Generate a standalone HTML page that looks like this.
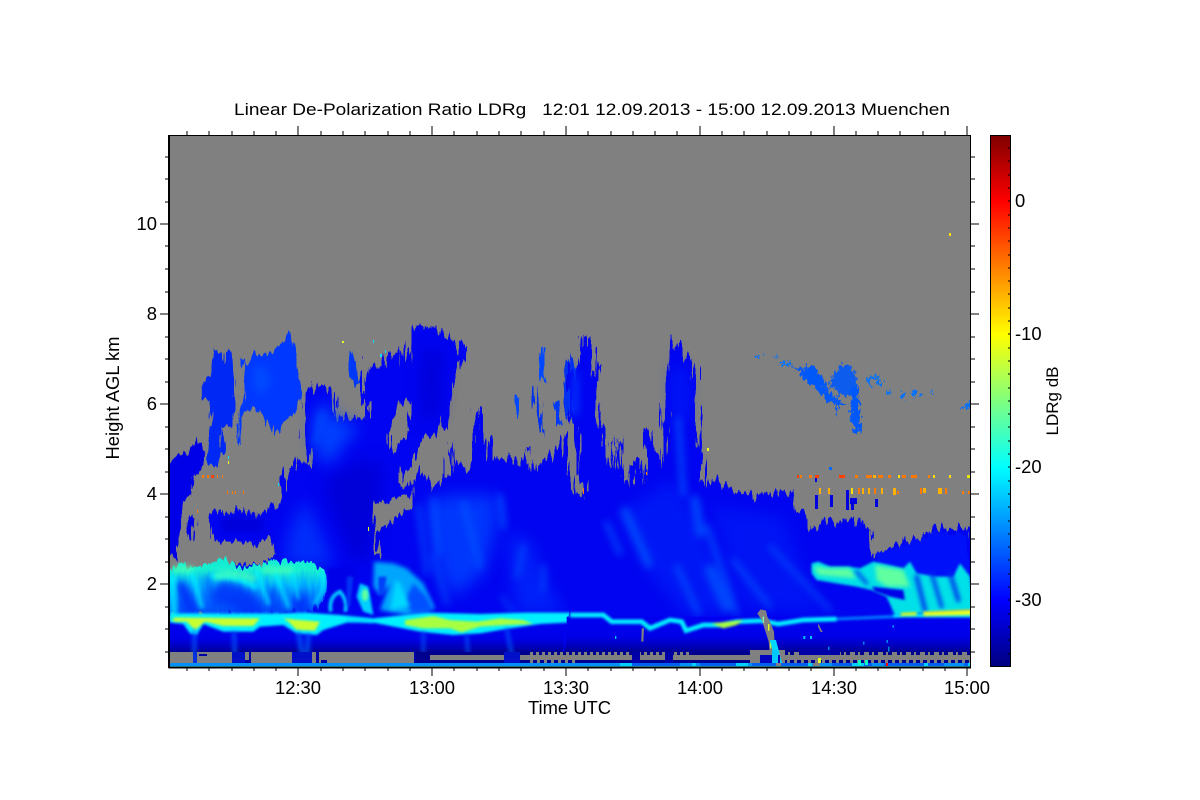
<!DOCTYPE html>
<html><head><meta charset="utf-8"><style>
html,body{margin:0;padding:0;background:#fff;width:1200px;height:800px;overflow:hidden}
svg{display:block}
text{font-family:"Liberation Sans",sans-serif;fill:#000;font-size:18.4px}
</style></head><body>
<svg xmlns="http://www.w3.org/2000/svg" width="1200" height="800" viewBox="0 0 1200 800">
<defs>
<clipPath id="plot"><rect x="169" y="135" width="801" height="532"/></clipPath>
<linearGradient id="jet" x1="0" y1="1" x2="0" y2="0">
<stop offset="0" stop-color="#000080"/><stop offset=".125" stop-color="#0000ff"/><stop offset=".375" stop-color="#00ffff"/><stop offset=".625" stop-color="#ffff00"/><stop offset=".875" stop-color="#ff0000"/><stop offset="1" stop-color="#800000"/>
</linearGradient>
<linearGradient id="low" x1="0" y1="0" x2="0" y2="1">
<stop offset="0" stop-color="#0000f0"/><stop offset=".55" stop-color="#0000e8"/><stop offset=".8" stop-color="#0000c0"/><stop offset="1" stop-color="#000090"/>
</linearGradient>
<linearGradient id="band" gradientUnits="userSpaceOnUse" x1="0" y1="710" x2="0" y2="880">
<stop offset="0" stop-color="#10e8d8"/><stop offset=".22" stop-color="#18f0d0"/><stop offset=".5" stop-color="#00b0ff"/><stop offset=".8" stop-color="#0060ff"/><stop offset="1" stop-color="#0048f8"/>
</linearGradient>
<filter id="b1" filterUnits="userSpaceOnUse" x="-100" y="-100" width="1500" height="1300" color-interpolation-filters="sRGB"><feGaussianBlur stdDeviation="11"/></filter>
<filter id="b2" filterUnits="userSpaceOnUse" x="-100" y="-100" width="1500" height="1300" color-interpolation-filters="sRGB"><feGaussianBlur stdDeviation="24"/></filter>
<filter id="b3" filterUnits="userSpaceOnUse" x="-100" y="-100" width="1500" height="1300" color-interpolation-filters="sRGB"><feGaussianBlur stdDeviation="4"/></filter>
<filter id="b4" filterUnits="userSpaceOnUse" x="-100" y="-100" width="1500" height="1300" color-interpolation-filters="sRGB"><feGaussianBlur stdDeviation="6"/></filter>
<filter id="j" filterUnits="userSpaceOnUse" x="-20" y="-20" width="1320" height="1120" color-interpolation-filters="sRGB">
<feTurbulence type="fractalNoise" baseFrequency=".09 .012" numOctaves="2" seed="4" result="n"/>
<feDisplacementMap in="SourceGraphic" in2="n" scale="40" xChannelSelector="R" yChannelSelector="G"/>
</filter>
<filter id="j2" filterUnits="userSpaceOnUse" x="-20" y="-20" width="1320" height="1120" color-interpolation-filters="sRGB">
<feTurbulence type="fractalNoise" baseFrequency=".08 .008" numOctaves="3" seed="9" result="n"/>
<feDisplacementMap in="SourceGraphic" in2="n" scale="70" xChannelSelector="R" yChannelSelector="G"/>
</filter>
<filter id="j3" filterUnits="userSpaceOnUse" x="700" y="300" width="300" height="200" color-interpolation-filters="sRGB">
<feTurbulence type="fractalNoise" baseFrequency=".35 .2" numOctaves="2" seed="3" result="n"/>
<feDisplacementMap in="SourceGraphic" in2="n" scale="12" xChannelSelector="R" yChannelSelector="G"/>
</filter>
</defs>

<rect x="169" y="135" width="801" height="532" fill="#808080"/>

<g clip-path="url(#plot)">
<!-- ============ left half ============ -->
<g transform="translate(160,320) scale(.33333)">
 <g filter="url(#j)">
  <polygon fill="#0000e8" points="20,1000 20,440 55,400 80,405 105,350 135,395 130,430 100,470 98,520 78,525 62,585 55,720 40,712 20,700"/>
  <polygon fill="#0028f4" points="155,85 185,100 190,140 200,100 215,95 220,180 225,250 215,320 190,320 185,350 190,395 165,440 140,430 150,250 130,230 130,200 155,150"/>
  <polygon fill="#0038ff" points="245,110 265,130 290,100 330,100 365,70 395,30 405,100 415,180 425,230 400,280 370,310 340,350 320,290 280,260 250,290 235,380 230,320 250,240 255,190"/>
  <polygon fill="#0038f8" points="578,90 590,130 598,190 580,195 568,170"/>
  <polygon fill="#0048ff" points="1065,230 1075,225 1075,300 1066,290"/>
  <polygon fill="#0030f0" points="1130,190 1145,260 1152,355 1135,290 1120,240"/>
  <polygon fill="#0048ff" points="1142,85 1156,80 1152,190 1143,170"/>
  <polygon fill="#0038f8" points="1182,245 1198,240 1205,310 1190,320"/>
  <polygon fill="#0030f0" points="1208,190 1225,100 1240,140 1270,150 1270,320 1230,310 1212,260"/>
 </g>
 <polygon filter="url(#j2)" fill="#0004f0" points="150,590 185,570 240,570 290,590 330,555 360,545 365,470 410,420 448,440 432,340 425,250 460,195 510,200 530,250 535,290 590,285 622,310 625,260 600,230 600,170 625,130 660,150 685,105 715,100 725,60 745,160 740,130 760,30 800,15 850,35 900,70 912,110 880,180 870,240 860,320 820,340 790,350 760,425 730,450 722,500 745,500 760,480 790,450 820,500 870,460 868,350 880,440 905,445 930,430 935,350 955,250 970,380 985,340 1000,430 1020,420 1040,400 1060,420 1080,430 1105,380 1125,460 1140,430 1180,400 1200,340 1215,350 1230,480 1240,520 1280,520 1280,1000 150,1000"/>
 <!-- darker column -->
 <polygon fill="#0000d8" filter="url(#b2)" points="490,480 600,420 670,430 655,560 630,700 590,740 550,650 510,560"/>
 <polygon fill="#0000d8" filter="url(#b2)" points="790,85 850,95 835,280 790,310 785,200"/>
 <polygon fill="#0000d8" filter="url(#b1)" points="185,595 310,595 310,635 185,635"/>
 <!-- brighter cloud areas -->
 <polygon fill="#0048ff" opacity=".9" filter="url(#b2)" points="465,285 480,250 505,250 515,290 590,320 590,340 550,370 525,420 490,430 470,400 460,340"/>
 <polygon fill="#0040ff" opacity=".7" filter="url(#b2)" points="390,630 430,540 460,590 510,700 510,740 370,730"/>
 <polygon fill="#0040ff" opacity=".85" filter="url(#b2)" points="800,550 860,525 1010,525 1010,620 970,760 880,830 840,760 810,640"/>
 <polygon fill="#0034ff" opacity=".6" filter="url(#b2)" points="1040,640 1110,660 1160,800 1220,880 1070,880"/>
 <polygon fill="#0050ff" opacity=".7" filter="url(#b1)" points="280,140 320,140 335,190 300,230 280,190"/>
 <g fill="none" stroke="#0058ff" stroke-linecap="round" filter="url(#b1)" opacity=".7">
  <path stroke-width="18" d="M820,540 L835,700"/>
  <path stroke-width="18" d="M910,550 L960,740"/>
  <path stroke-width="18" d="M1020,530 L1030,620"/>
  <path stroke-width="14" d="M820,710 L860,850"/>
  <path stroke-width="14" d="M1090,680 L1070,770"/>
  <path stroke-width="14" d="M1150,740 L1150,810"/>
  <path stroke-width="16" d="M485,280 L465,370"/>
  <path stroke-width="10" d="M1025,830 L1060,880"/>
  <path stroke-width="14" d="M775,560 L800,760"/>
 </g>
 <!-- gray pockets -->
 <polygon fill="#808080" filter="url(#j)" points="688,340 720,250 755,240 745,330 700,400 690,385"/>
 <polygon fill="#808080" filter="url(#j)" points="678,545 722,525 745,528 760,500 755,560 720,585 690,608 660,632 650,640 655,716 636,680 645,550"/>
 <polygon fill="#808080" filter="url(#j)" points="160,665 272,665 280,690 302,662 332,650 345,712 300,735 245,735 180,735 120,720 60,720 55,650 150,650"/>
 <polygon fill="#0000e8" filter="url(#j)" points="85,588 100,588 98,665 88,660"/>

 <!-- cyan band -->
 <g filter="url(#j)">
  <polygon fill="url(#band)" points="24,770 35,745 60,725 90,745 130,735 190,715 240,745 300,735 345,725 400,725 440,720 495,750 500,800 490,840 450,875 24,885"/>
 </g>
 <g fill="none" stroke="#0030f8" stroke-linecap="round" filter="url(#b1)">
  <path stroke-width="32" d="M65,800 L95,870"/>
  <path stroke-width="70" d="M195,820 Q260,830 275,880" opacity=".85"/>
  <path stroke-width="24" d="M335,815 L345,880" opacity=".7"/>
  <path stroke-width="38" d="M420,835 L425,880" opacity=".9"/>
  <path stroke-width="16" d="M140,775 L160,850" opacity=".6"/>
 </g>
 <g fill="none" stroke="#00ffff" stroke-linecap="round" filter="url(#b4)" opacity=".7">
  <path stroke-width="22" d="M36,775 L42,880"/>
  <path stroke-width="14" d="M95,760 L125,860"/>
  <path stroke-width="16" d="M160,770 Q220,760 285,800"/>
  <path stroke-width="12" d="M290,755 L325,850"/>
  <path stroke-width="12" d="M345,755 L385,860"/>
  <path stroke-width="10" d="M395,755 L415,835"/>
  <path stroke-width="12" d="M485,760 Q500,800 465,850"/>
 </g>
 <path fill="none" stroke="#50ffb0" stroke-width="22" filter="url(#b4)" d="M40,748 H100 M165,770 Q230,752 285,780 M310,750 L400,750" opacity=".6"/>
 <!-- cyan patches centre -->
 <polygon fill="#0000e8" filter="url(#b3)" points="505,745 580,740 590,760 560,885 500,885"/>
 <path fill="none" stroke="#00c8ff" stroke-width="11" filter="url(#b3)" d="M512,875 Q505,830 540,815 Q565,845 555,875"/>
 <polygon fill="#00d0ff" filter="url(#b3)" points="600,790 625,800 640,885 610,875 590,830"/>
 <ellipse cx="615" cy="825" rx="10" ry="18" fill="#60ffa0" filter="url(#b3)"/>
 <polygon fill="#00b8ff" opacity=".9" filter="url(#b4)" points="642,725 700,730 740,745 790,790 825,865 740,885 660,870 690,790 660,825 640,800"/>
 <polygon fill="#0050ff" filter="url(#b4)" points="760,790 800,830 820,870 760,880 730,850"/>
 <polygon fill="#00d8ff" filter="url(#b4)" points="708,780 720,790 750,860 690,870"/>
 <polygon fill="#0040f8" filter="url(#b3)" points="655,770 680,770 672,820 655,825"/>
 <polygon fill="#0040f8" filter="url(#b3)" points="560,770 580,770 570,860 560,860" opacity=".8"/>

 <!-- lower layer -->
 <rect x="20" y="905" width="1280" height="92" fill="url(#low)"/>
 <!-- line -->
 <g filter="url(#b3)">
 <polygon fill="#00f0ff" points="30,880 340,880 440,878 540,885 640,895 800,878 960,882 1100,878 1250,878 1280,880 1280,905 1140,912 1050,925 960,940 880,945 780,935 640,908 560,908 490,930 470,945 410,940 370,915 300,920 280,935 190,935 130,912 110,945 90,940 70,912 30,908"/>
 <polygon fill="#c8ff30" points="40,893 90,893 300,895 280,918 190,918 135,905 105,930 80,905 40,905"/>
 <polygon fill="#c8ff30" points="370,895 420,900 480,905 465,932 410,930 385,905"/>
 <polygon fill="#a8ff40" points="735,900 820,888 870,900 950,905 1020,895 1090,900 1120,912 1040,915 960,920 905,937 870,925 790,925 735,915"/>
 <polygon fill="#00e0ff" points="560,890 640,900 640,910 560,906"/>
 </g>
 <g fill="none" stroke="#0060ff" filter="url(#b4)" opacity=".8">
  <path stroke-width="11" d="M103,930 L103,1028"/>
  <path stroke-width="11" d="M222,935 L225,1028"/>
  <path stroke-width="13" d="M415,935 L430,1028"/>
  <path stroke-width="13" d="M445,940 L440,1028"/>
  <path stroke-width="10" d="M1040,925 L1060,1028"/>
  <path stroke-width="9" d="M790,935 L790,1000"/>
  <path stroke-width="9" d="M920,945 L925,1020"/>
 </g>
</g>

<!-- ============ right half ============ -->
<g transform="translate(570,320) scale(.33333)">
 <polygon filter="url(#j2)" fill="#0004f0" points="-10,560 -10,520 20,530 45,530 48,490 22,470 20,360 30,330 0,300 0,100 12,170 30,110 35,50 50,45 70,100 65,170 85,135 95,140 85,290 105,330 105,420 120,460 125,355 135,450 150,350 160,490 185,490 190,430 210,425 220,490 225,350 245,330 255,400 270,405 280,440 285,250 295,120 305,80 330,65 350,110 370,130 375,280 385,380 405,395 395,430 395,490 430,480 470,500 500,520 570,520 660,515 670,570 715,580 720,630 770,600 800,610 830,590 860,600 880,620 905,630 915,710 970,680 1000,660 1030,680 1090,620 1150,630 1210,620 1210,1000 -10,1000"/>
 <polygon fill="#0040ff" opacity=".7" filter="url(#b1)" points="5,130 10,130 12,190 25,140 28,280 10,290 5,280"/>
 <polygon fill="#0020f8" opacity=".7" filter="url(#b2)" points="150,580 300,480 350,540 480,800 480,880 340,880 240,760"/>
 <polygon fill="#0030ff" opacity=".6" filter="url(#b2)" points="310,140 345,145 350,300 310,300"/>
 <polygon fill="#0020f8" opacity=".6" filter="url(#b2)" points="420,560 640,590 700,760 760,880 520,860"/>
 <g fill="none" stroke="#0058ff" stroke-linecap="round" filter="url(#b1)" opacity=".75">
  <path stroke-width="28" d="M165,575 L235,730"/>
  <path stroke-width="16" d="M110,610 L150,700"/>
  <path stroke-width="28" d="M375,540 L390,640"/>
  <path stroke-width="16" d="M410,620 L500,880"/>
  <path stroke-width="34" d="M420,750 L470,860"/>
  <path stroke-width="16" d="M320,740 L385,880"/>
  <path stroke-width="14" d="M490,720 L600,860"/>
  <path stroke-width="12" d="M600,680 L780,870"/>
  <path stroke-width="18" d="M325,300 L340,520"/>
 </g>

 <!-- right block -->
 <g filter="url(#j)">
  <polygon fill="#0010f8" points="915,700 990,680 1090,640 1190,640 1210,880 960,880"/>
 </g>
 <polygon fill="#00e0e8" filter="url(#b3)" points="725,730 745,725 780,740 835,740 870,745 910,725 1000,745 1020,725 1040,760 1100,770 1150,770 1170,730 1200,770 1210,870 975,885 950,830 905,810 860,800 800,790 740,780 725,760"/>
 <polygon fill="#60ffa0" filter="url(#b4)" points="730,738 770,745 840,745 860,775 800,770 745,765"/>
 <polygon fill="#60ffa0" filter="url(#b4)" points="915,735 1000,750 1020,800 950,800 920,780"/>
 <polygon fill="#0000e8" filter="url(#b3)" points="905,800 1000,810 1005,840 960,830 915,815"/>
 <g fill="none" stroke="#0028f0" stroke-linecap="round" filter="url(#b4)" opacity=".85">
  <path stroke-width="14" d="M1040,770 L1065,870"/>
  <path stroke-width="12" d="M1085,760 L1115,860"/>
  <path stroke-width="14" d="M1140,760 L1165,840"/>
  <path stroke-width="10" d="M860,755 L890,790"/>
 </g>

 <!-- lower layer -->
 <rect x="-10" y="890" width="1220" height="107" fill="url(#low)"/>
 <!-- line -->
 <g filter="url(#b3)">
 <path fill="none" stroke="#00f0ff" stroke-width="14" d="M0,885 H100 L125,905 H215 L240,925 L300,900 L335,905 L348,932 L400,915 L450,915 L500,905 L575,902 L625,912 L700,900 L800,897"/>
 <path fill="none" stroke="#0080ff" stroke-width="9" d="M800,897 L970,890 1000,888"/>
 <polygon fill="#a8ff40" points="425,910 520,900 500,915 460,925"/>
 <polygon fill="#00f0ff" points="970,882 1205,878 1205,892 970,892"/>
 <polygon fill="#d8ff20" points="995,878 1040,876 1040,886 990,888"/>
 <polygon fill="#e8ff20" points="1060,875 1205,868 1205,885 1060,888"/>
 </g>

 <!-- gray stream -->
 <polygon fill="#808080" points="562,880 572,868 588,872 592,890 600,905 612,935 615,990 622,1005 600,1005 596,965 585,930 575,900"/>
 <polygon fill="#00d0ff" points="606,965 616,965 625,1020 632,1032 615,1030"/>
 <rect x="578" y="890" width="4" height="18" fill="#80ffc0"/>
 <rect x="594" y="912" width="4" height="20" fill="#e8ff20"/>
 <rect x="600" y="965" width="4" height="20" fill="#a0ff60"/>
 <rect x="608" y="988" width="5" height="18" fill="#a0ff60"/>
 <polygon fill="#808080" points="215,925 222,925 220,965 214,965"/>
 <polygon fill="#808080" points="745,910 752,925 758,936 752,936 744,920"/>
 <g fill="#00c8ff">
  <rect x="135" y="948" width="4" height="9"/><rect x="700" y="948" width="6" height="9"/><rect x="720" y="948" width="6" height="9"/>
  <rect x="968" y="915" width="3" height="9"/><rect x="950" y="960" width="3" height="9"/><rect x="775" y="980" width="3" height="15"/>
  <rect x="955" y="980" width="3" height="15"/><rect x="880" y="965" width="3" height="9"/>
 </g>
</g>

<!-- ============ bottom strips ============ -->
<rect x="169" y="652" width="801" height="11" fill="#808080"/>
<rect x="415" y="652" width="555" height="3" fill="#00008c"/>
<rect x="415" y="655" width="15" height="8" fill="#000090"/>
<rect x="414" y="660" width="556" height="3" fill="#000090"/>
<path d="M530,653.5 H690" stroke="#808080" stroke-width="3" stroke-dasharray="3 3"/>
<path d="M780,653.5 H970" stroke="#808080" stroke-width="3" stroke-dasharray="5 3 2 4"/>
<rect x="430" y="655" width="340" height="5" fill="#808080"/>
<rect x="790" y="655" width="180" height="5" fill="#808080"/>
<path d="M530,661.5 H575 M780,661.5 H970" stroke="#808080" stroke-width="3" stroke-dasharray="3 4"/>
<g fill="#0000a8">
 <rect x="193" y="652" width="4" height="11" fill="#0030e0"/><rect x="199" y="654" width="8" height="2"/>
 <rect x="232" y="652" width="13" height="11" fill="#0010c8"/><rect x="245" y="660" width="6" height="3"/><rect x="249" y="652" width="2" height="8"/>
 <rect x="292" y="652" width="20" height="11" fill="#0010c8"/><rect x="316" y="652" width="3" height="11"/><rect x="321" y="660" width="6" height="3"/>
 <rect x="504" y="652" width="16" height="11" fill="#0010c8"/><rect x="414" y="652" width="2" height="11"/>
 <rect x="632" y="652" width="8" height="11"/><rect x="665" y="652" width="8" height="11"/><rect x="800" y="650" width="40" height="5"/>
</g>
<rect x="750" y="650" width="35" height="14" fill="#808080"/>
<polygon points="770,640 776,640 782,663 776,663" fill="#00d8ff"/>
<rect x="760" y="655" width="20" height="8" fill="#0000c0"/>
<rect x="772" y="650" width="6" height="13" fill="#00c8ff"/>
<rect x="169" y="663" width="801" height="3" fill="#0090f8"/>
<rect x="169" y="666" width="801" height="1" fill="#40e0ff"/>
<path d="M620,664.5 H970" stroke="#0060f0" stroke-width="3" stroke-dasharray="60 20 40 12"/>
<path d="M620,664.5 H970" stroke="#00d0ff" stroke-width="3" stroke-dasharray="12 60 4 40"/>
<rect x="776" y="663" width="5" height="3" fill="#808080"/><rect x="813" y="663" width="7" height="3" fill="#808080"/>
<rect x="886" y="663" width="2" height="3" fill="#ff0000"/>
<rect x="818" y="658" width="3" height="5" fill="#e0ff20"/><rect x="858" y="660" width="3" height="5" fill="#00ffc0"/>
<rect x="865" y="660" width="3" height="5" fill="#00ffc0"/>

<!-- upper thin cloud right -->
<g filter="url(#j3)">
<g fill="#0058f8">
 <polygon points="793,365 804,368 812,378 822,386 830,390 835,400 850,405 838,405 826,400 815,388 803,378"/>
 <polygon points="803,365 815,368 821,375 830,390 812,380"/>
 <polygon points="840,365 850,365 858,380 858,392 848,396 838,395 830,382" opacity=".9"/>
 <polygon points="851,386 858,386 860,420 862,428 856,436 851,422"/>
 <polygon points="835,400 838,395 838,412 836,416"/>
</g>
<g fill="#0070ff">
 <rect x="757" y="354" width="2" height="5"/><rect x="763" y="354" width="2" height="3"/><rect x="775" y="354" width="2" height="3"/>
 <rect x="780" y="362" width="6" height="3"/><rect x="786" y="362" width="6" height="4"/>
 <rect x="868" y="376" width="12" height="3"/><rect x="866" y="378" width="4" height="6"/><rect x="878" y="380" width="4" height="6"/>
 <rect x="888" y="390" width="3" height="5"/><rect x="902" y="392" width="3" height="6"/><rect x="912" y="390" width="3" height="8"/>
 <rect x="920" y="393" width="3" height="4"/><rect x="931" y="392" width="3" height="2"/><rect x="965" y="403" width="5" height="5"/>
 <rect x="960" y="407" width="5" height="2"/>
</g>
</g>
<g fill="#0000e0">
 <rect x="815" y="495" width="3" height="14"/><rect x="830" y="495" width="3" height="12"/><rect x="846" y="490" width="3" height="20"/>
 <rect x="850" y="498" width="7" height="6"/><rect x="875" y="499" width="3" height="8"/><rect x="851" y="504" width="3" height="6"/>
 <rect x="815" y="476" width="2" height="6"/>
</g>
<rect x="829" y="467" width="3" height="3" fill="#0068ff"/>

<!-- orange dash rows -->
<g fill="#ff7800">
 <rect x="797" y="475" width="2" height="3" fill="#ff4000"/><rect x="800" y="475" width="2" height="3"/><rect x="809" y="475" width="3" height="3"/><rect x="815" y="475" width="4" height="3" fill="#ff4000"/>
 <rect x="839" y="475" width="6" height="3" fill="#ff4000"/><rect x="855" y="475" width="3" height="3"/><rect x="866" y="475" width="6" height="3"/><rect x="873" y="475" width="3" height="3" fill="#ffb000"/>
 <rect x="878" y="475" width="5" height="3"/><rect x="888" y="475" width="3" height="3"/><rect x="898" y="475" width="2" height="3" fill="#ffe000"/><rect x="902" y="475" width="4" height="3"/>
 <rect x="911" y="475" width="6" height="3"/><rect x="928" y="475" width="2" height="3"/><rect x="933" y="475" width="2" height="3" fill="#ffe000"/><rect x="949" y="475" width="2" height="3" fill="#ffe000"/><rect x="967" y="475" width="3" height="3" fill="#e8e800"/>
 <rect x="819" y="488" width="2" height="6" fill="#ffb000"/><rect x="828" y="488" width="2" height="6" fill="#ffb000"/><rect x="851" y="488" width="2" height="6" fill="#ffe000"/>
 <rect x="858" y="488" width="2" height="6"/><rect x="862" y="488" width="2" height="6" fill="#ffb000"/><rect x="868" y="488" width="2" height="6" fill="#ffb000"/><rect x="874" y="488" width="2" height="6"/>
 <rect x="881" y="488" width="2" height="6" fill="#ffb000"/><rect x="893" y="488" width="3" height="7" fill="#ffb000"/>
 <rect x="897" y="491" width="2" height="3"/><rect x="920" y="488" width="2" height="6"/><rect x="923" y="488" width="3" height="5" fill="#ffb000"/>
 <rect x="938" y="488" width="4" height="6" fill="#ffb000"/><rect x="945" y="488" width="2" height="6"/><rect x="962" y="491" width="2" height="3"/><rect x="968" y="491" width="2" height="3"/>
 <rect x="583" y="488" width="1" height="6"/>
 <rect x="202" y="475" width="2" height="3"/><rect x="207" y="475" width="2" height="3"/><rect x="211" y="475" width="3" height="3" fill="#ff4000"/><rect x="217" y="475" width="1" height="3"/><rect x="222" y="475" width="1" height="3"/>
 <rect x="227" y="491" width="1" height="3"/><rect x="232" y="491" width="1" height="3"/><rect x="235" y="491" width="1" height="3"/><rect x="243" y="491" width="1" height="3"/>
 <rect x="197" y="510" width="1" height="3"/>
</g>
<g fill="#e8ff20">
 <rect x="342" y="341" width="2" height="2"/><rect x="368" y="527" width="1" height="4"/><rect x="228" y="461" width="1" height="3"/><rect x="949" y="233" width="2" height="3" fill="#ffe000"/>
 <rect x="707" y="448" width="2" height="3"/><rect x="646" y="472" width="1" height="3" fill="#ff8000"/>
</g>
<g fill="#00e0ff">
 <rect x="380" y="354" width="2" height="3"/><rect x="385" y="350" width="1" height="3"/><rect x="228" y="456" width="1" height="3"/><rect x="278" y="483" width="1" height="3"/>
 <rect x="373" y="340" width="1" height="3"/>
</g>
</g>

<!-- colorbar -->
<rect x="990.5" y="135.5" width="20" height="531" fill="url(#jet)"/>
<rect x="990.5" y="135.5" width="20" height="531" fill="none" stroke="#000" stroke-width="1"/>

<!-- axes frame & ticks -->
<g stroke="#000" fill="none" shape-rendering="crispEdges" stroke-width="1">
 <rect x="169.5" y="135.5" width="801" height="532"/>
 <path d="M168.5,667.5H971" stroke-width="2"/>
 <path d="M169,135V668" stroke-width="2"/>
 <path d="M187,667V671M209,667V671M232,667V671M254,667V671M276,667V671M321,667V671M343,667V671M365,667V671M388,667V671M410,667V671M454,667V671M477,667V671M499,667V671M521,667V671M544,667V671M588,667V671M611,667V671M633,667V671M655,667V671M677,667V671M722,667V671M744,667V671M767,667V671M789,667V671M811,667V671M856,667V671M878,667V671M900,667V671M923,667V671M945,667V671"/>
 <path d="M298,667V676M432,667V676M566,667V676M700,667V676M834,667V676M967,667V676"/>
 <path d="M187,135V131M209,135V131M232,135V131M254,135V131M276,135V131M321,135V131M343,135V131M365,135V131M388,135V131M410,135V131M454,135V131M477,135V131M499,135V131M521,135V131M544,135V131M588,135V131M611,135V131M633,135V131M655,135V131M677,135V131M722,135V131M744,135V131M767,135V131M789,135V131M811,135V131M856,135V131M878,135V131M900,135V131M923,135V131M945,135V131"/>
 <path d="M298,135V126M432,135V126M566,135V126M700,135V126M834,135V126M967,135V126"/>
 <path d="M169,157H165M169,179H165M169,202H165M169,246H165M169,269H165M169,292H165M169,337H165M169,359H165M169,382H165M169,427H165M169,449H165M169,472H165M169,517H165M169,539H165M169,562H165M169,607H165M169,629H165M169,652H165"/>
 <path d="M169,224H160M169,314H160M169,404H160M169,494H160M169,584H160"/>
 <path d="M970,157H975M970,179H975M970,202H975M970,246H975M970,269H975M970,292H975M970,337H975M970,359H975M970,382H975M970,427H975M970,449H975M970,472H975M970,517H975M970,539H975M970,562H975M970,607H975M970,629H975M970,652H975"/>
 <path d="M970,224H979M970,314H979M970,404H979M970,494H979M970,584H979"/>
 <path d="M1008,148H1010M1008,161H1010M1008,175H1010M1008,188H1010M1008,201H1010M1008,215H1010M1008,228H1010M1008,241H1010M1008,255H1010M1008,268H1010M1008,281H1010M1008,294H1010M1008,308H1010M1008,321H1010M1008,334H1010M1008,348H1010M1008,361H1010M1008,374H1010M1008,388H1010M1008,401H1010M1008,414H1010M1008,427H1010M1008,441H1010M1008,454H1010M1008,467H1010M1008,481H1010M1008,494H1010M1008,507H1010M1008,521H1010M1008,534H1010M1008,547H1010M1008,560H1010M1008,574H1010M1008,587H1010M1008,600H1010M1008,614H1010M1008,627H1010M1008,640H1010M1008,654H1010"/>
</g>

<!-- text -->
<text x="234" y="115" style="font-size:17px" textLength="716" lengthAdjust="spacingAndGlyphs">Linear De-Polarization Ratio LDRg&#160;&#160;&#160;12:01 12.09.2013 - 15:00 12.09.2013 Muenchen</text>
<g text-anchor="end">
 <text x="157" y="230">10</text><text x="157" y="320">8</text><text x="157" y="410">6</text><text x="157" y="500">4</text><text x="157" y="590">2</text>
</g>
<g text-anchor="middle">
 <text x="298" y="694">12:30</text><text x="432" y="694">13:00</text><text x="566" y="694">13:30</text><text x="700" y="694">14:00</text><text x="834" y="694">14:30</text><text x="957" y="694" dx="10">15:00</text>
 <text x="569.5" y="714">Time UTC</text>
 <text transform="translate(119,398) rotate(-90)">Height AGL km</text>
 <text transform="translate(1058,401) rotate(-90)" style="font-size:17px">LDRg dB</text>
</g>
<text x="1015" y="207">0</text>
<text x="1015" y="340">-10</text>
<text x="1015" y="473">-20</text>
<text x="1015" y="606">-30</text>
</svg>
</body></html>
